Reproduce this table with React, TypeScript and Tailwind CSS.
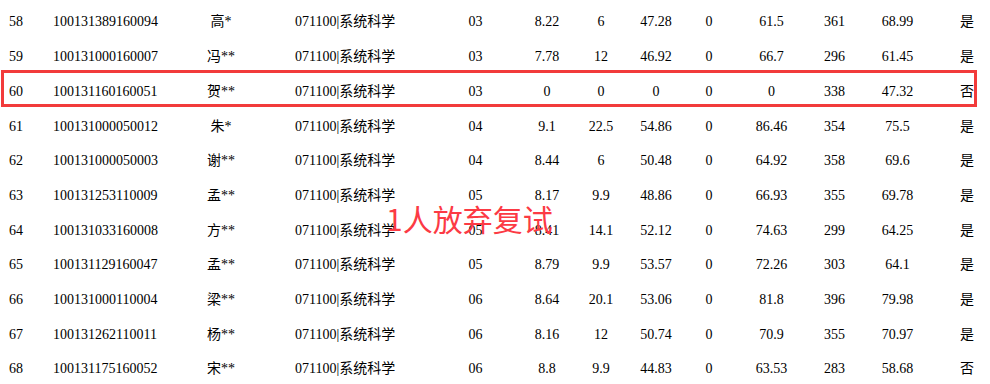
import React from "react";

type Row = string[];

const rows: Row[] = [
  ["58", "100131389160094", "高*", "03", "8.22", "6", "47.28", "0", "61.5", "361", "68.99", "是"],
  ["59", "100131000160007", "冯**", "03", "7.78", "12", "46.92", "0", "66.7", "296", "61.45", "是"],
  ["60", "100131160160051", "贺**", "03", "0", "0", "0", "0", "0", "338", "47.32", "否"],
  ["61", "100131000050012", "朱*", "04", "9.1", "22.5", "54.86", "0", "86.46", "354", "75.5", "是"],
  ["62", "100131000050003", "谢**", "04", "8.44", "6", "50.48", "0", "64.92", "358", "69.6", "是"],
  ["63", "100131253110009", "孟**", "05", "8.17", "9.9", "48.86", "0", "66.93", "355", "69.78", "是"],
  ["64", "100131033160008", "方**", "05", "8.41", "14.1", "52.12", "0", "74.63", "299", "64.25", "是"],
  ["65", "100131129160047", "孟**", "05", "8.79", "9.9", "53.57", "0", "72.26", "303", "64.1", "是"],
  ["66", "100131000110004", "梁**", "06", "8.64", "20.1", "53.06", "0", "81.8", "396", "79.98", "是"],
  ["67", "100131262110011", "杨**", "06", "8.16", "12", "50.74", "0", "70.9", "355", "70.97", "是"],
  ["68", "100131175160052", "宋**", "06", "8.8", "9.9", "44.83", "0", "63.53", "283", "58.68", "否"],
];

function TableRow({ r, boxed }: { r: Row; boxed?: boolean }) {
  return (
    <div className="relative flex h-[34.7px] items-center whitespace-nowrap">
      <div className="w-[53px] pl-[9px]">{r[0]}</div>
      <div className="w-[137px]">{r[1]}</div>
      <div className="w-[62px] text-center">{r[2]}</div>
      <div className="w-[188px] pl-[43px]">071100|系统科学</div>
      <div className="w-[71px] text-center">{r[3]}</div>
      <div className="w-[72px] text-center">{r[4]}</div>
      <div className="w-[36px] text-center">{r[5]}</div>
      <div className="w-[74px] text-center">{r[6]}</div>
      <div className="w-[32px] text-center">{r[7]}</div>
      <div className="w-[93px] text-center">{r[8]}</div>
      <div className="w-[33px] text-center">{r[9]}</div>
      <div className="w-[93px] text-center">{r[10]}</div>
      <div className="w-[46px] text-center">{r[11]}</div>
      {boxed && (
        <div className="pointer-events-none absolute left-[1px] top-[-3.7px] h-[37px] w-[976px] border-[3.5px] border-[#f23b3b]" />
      )}
    </div>
  );
}

export default function App() {
  return (
    <div
      className="relative h-[384px] w-[990px] overflow-hidden bg-white pt-[4.6px] text-[14px] text-black"
      style={{ fontFamily: '"Liberation Serif", "Noto Sans CJK SC", serif' }}
    >
      {rows.map((r) => (
        <TableRow key={r[0]} r={r} boxed={r[0] === "60"} />
      ))}
      <div
        className="absolute left-[386px] top-[203px] text-[30px] leading-[30px] text-[#fc3a44]"
        style={{ fontFamily: '"Noto Sans CJK SC", sans-serif' }}
      >
        1人放弃复试
      </div>
    </div>
  );
}
